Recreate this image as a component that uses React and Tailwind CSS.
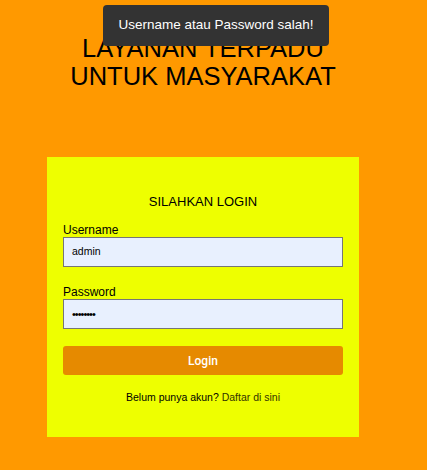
export default function App() {
  return (
    <div className="min-h-screen w-full bg-[#ff9900] font-['Liberation_Sans',Arial,sans-serif] text-black relative">
      <div className="w-[406px] flex flex-col items-center pt-[34px]">
        <h1 className="text-[25.5px] leading-[28px] text-center font-normal">
          LAYANAN TERPADU
          <br />
          UNTUK MASYARAKAT
        </h1>
        <div className="mt-[67px] w-[312px] h-[280px] bg-[#eeff00] px-4 pt-[37px]">
          <h2 className="text-[13px] leading-[15px] text-center font-normal">SILAHKAN LOGIN</h2>
          <div className="mt-[14px] flex flex-col">
            <label className="text-[12px] leading-[14px]">Username</label>
            <div className="h-[30px] w-full bg-[#e8f0fe] border border-[#767676] flex items-center pl-[8px] text-[10.5px]">
              admin
            </div>
            <label className="mt-[18px] text-[12px] leading-[14px]">Password</label>
            <div className="h-[30px] w-full bg-[#e8f0fe] border border-[#767676] flex items-center pl-[8px] text-[11px] tracking-[-1px]">
              ••••••••
            </div>
            <button className="mt-[17px] h-[29px] w-full bg-[#e68a00] rounded-[3px] text-white text-[12px] font-['Roboto',Arial,sans-serif] font-medium">
              Login
            </button>
            <p className="mt-[16px] text-[10.5px] leading-[13px] text-center">
              Belum punya akun? <span className="text-[#333300]">Daftar di sini</span>
            </p>
          </div>
        </div>
      </div>
      <div className="absolute top-[5px] left-[103px] w-[226px] h-[41px] bg-[#333333] rounded-[4px] flex items-center justify-center text-white text-[13.5px]">
        Username atau Password salah!
      </div>
    </div>
  );
}
